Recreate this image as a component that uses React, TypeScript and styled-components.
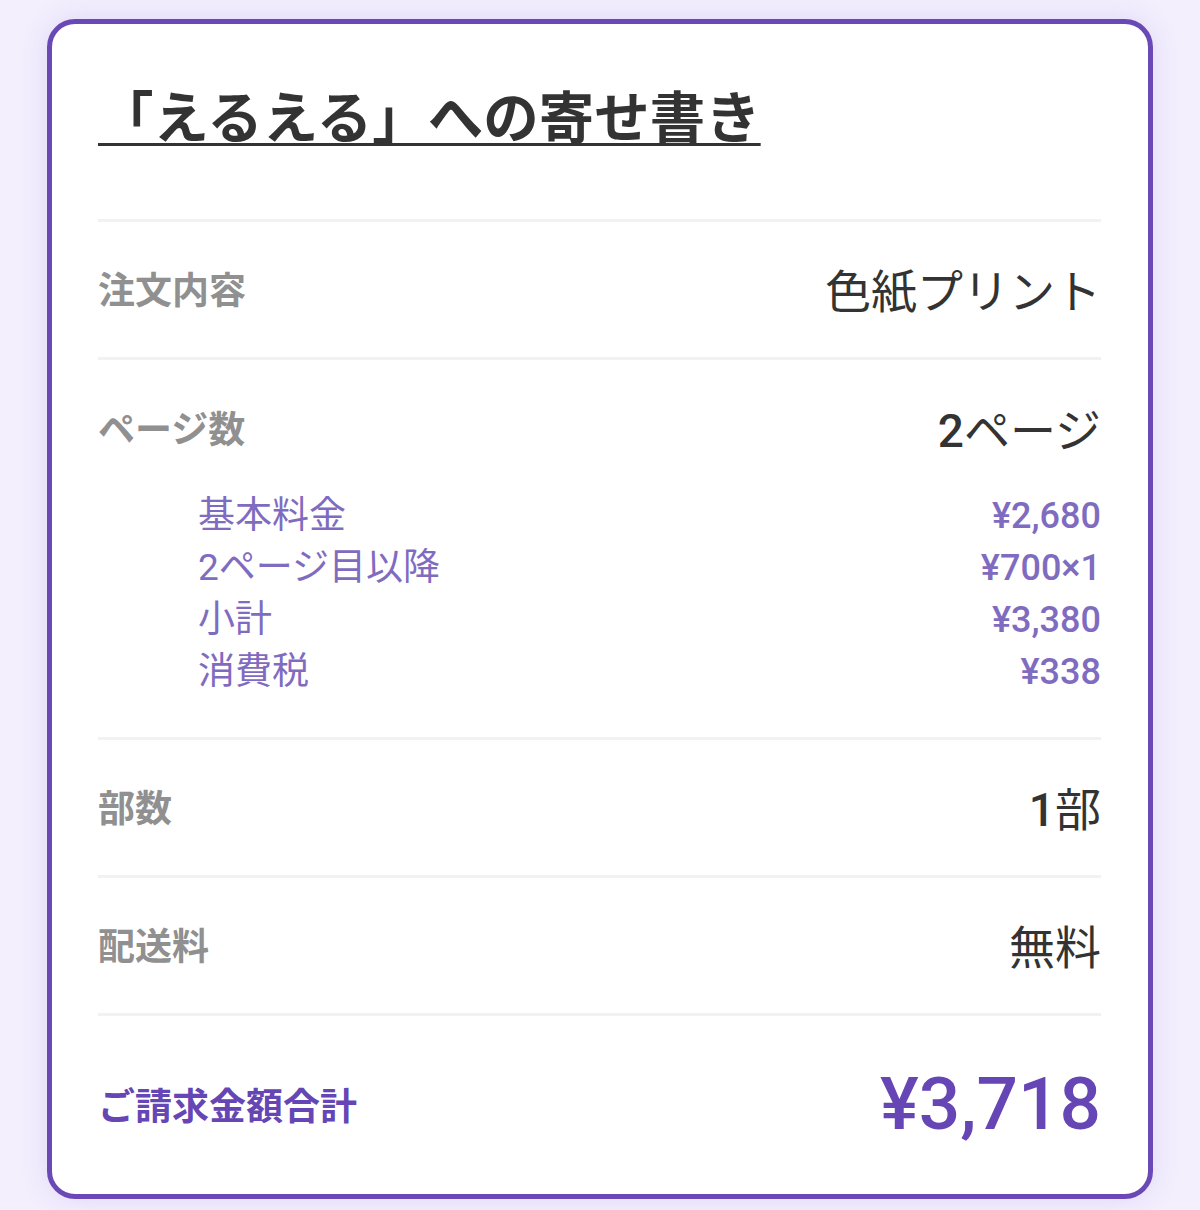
import React from "react";
import styled, { createGlobalStyle } from "styled-components";

const GlobalStyle = createGlobalStyle`
  body {
    margin: 0;
    background: #f3effd;
    font-family: Roboto, "Noto Sans CJK JP", sans-serif;
  }
`;

const Page = styled.div`
  padding: 19px 47px 11px;
`;

const Card = styled.div`
  background: #ffffff;
  border: 5px solid #6a49b6;
  border-radius: 28px;
  padding: 0 47px 0 46px;
  box-shadow: 0 0 28px 0 rgb(120 80 220 / 14%);
`;

const Title = styled.h1`
  margin: 0;
  padding: 61px 0 64px;
  line-height: 70px;
  font-size: 55.5px;
  font-weight: 700;
  color: #333333;

  span {
    text-decoration: underline;
    text-decoration-thickness: 3px;
    text-underline-offset: 5px;
  }
`;

const Section = styled.div<{ $pb?: number }>`
  border-top: 3px solid #f2f2f3;
  padding-bottom: ${(p) => p.$pb ?? 0}px;
`;

const Row = styled.div<{ $h: number; $pt?: number }>`
  display: flex;
  justify-content: space-between;
  align-items: center;
  height: ${(p) => p.$h}px;
  padding-top: ${(p) => p.$pt ?? 0}px;
  padding-bottom: 3px;
  box-sizing: border-box;
`;

const Label = styled.div`
  font-size: 37px;
  font-weight: 700;
  color: #909090;
`;

const Value = styled.div`
  font-size: 46px;
  font-weight: 400;
  color: #333333;

  b {
    font-weight: 500;
  }
`;

const SubList = styled.div`
  display: grid;
  grid-template-columns: 1fr auto;
  padding-left: 100px;
  line-height: 52px;
  color: #7f6cc0;
`;

const SubLabel = styled.div`
  font-size: 37px;
  font-weight: 400;
`;

const SubValue = styled.div`
  font-size: 36px;
  font-weight: 500;
  text-align: right;
`;

const TotalLabel = styled.div`
  font-size: 37px;
  font-weight: 700;
  color: #6546b4;
`;

const TotalValue = styled.div`
  font-size: 73px;
  font-weight: 500;
  color: #6546b4;
`;

const breakdown = [
  ["基本料金", "¥2,680"],
  ["2ページ目以降", "¥700×1"],
  ["小計", "¥3,380"],
  ["消費税", "¥338"],
];

export default function App() {
  return (
    <>
      <GlobalStyle />
      <Page>
        <Card>
          <Title>
            <span>「えるえる」への寄せ書き</span>
          </Title>
          <Section>
            <Row $h={135}>
              <Label>注文内容</Label>
              <Value>色紙プリント</Value>
            </Row>
          </Section>
          <Section $pb={39}>
            <Row $h={130} $pt={6}>
              <Label>ページ数</Label>
              <Value>
                <b>2</b>ページ
              </Value>
            </Row>
            <SubList>
              {breakdown.map(([label, value]) => (
                <React.Fragment key={label}>
                  <SubLabel>{label}</SubLabel>
                  <SubValue>{value}</SubValue>
                </React.Fragment>
              ))}
            </SubList>
          </Section>
          <Section>
            <Row $h={135}>
              <Label>部数</Label>
              <Value>
                <b>1</b>部
              </Value>
            </Row>
          </Section>
          <Section>
            <Row $h={135}>
              <Label>配送料</Label>
              <Value>無料</Value>
            </Row>
          </Section>
          <Section>
            <Row $h={178}>
              <TotalLabel>ご請求金額合計</TotalLabel>
              <TotalValue>¥3,718</TotalValue>
            </Row>
          </Section>
        </Card>
      </Page>
    </>
  );
}
